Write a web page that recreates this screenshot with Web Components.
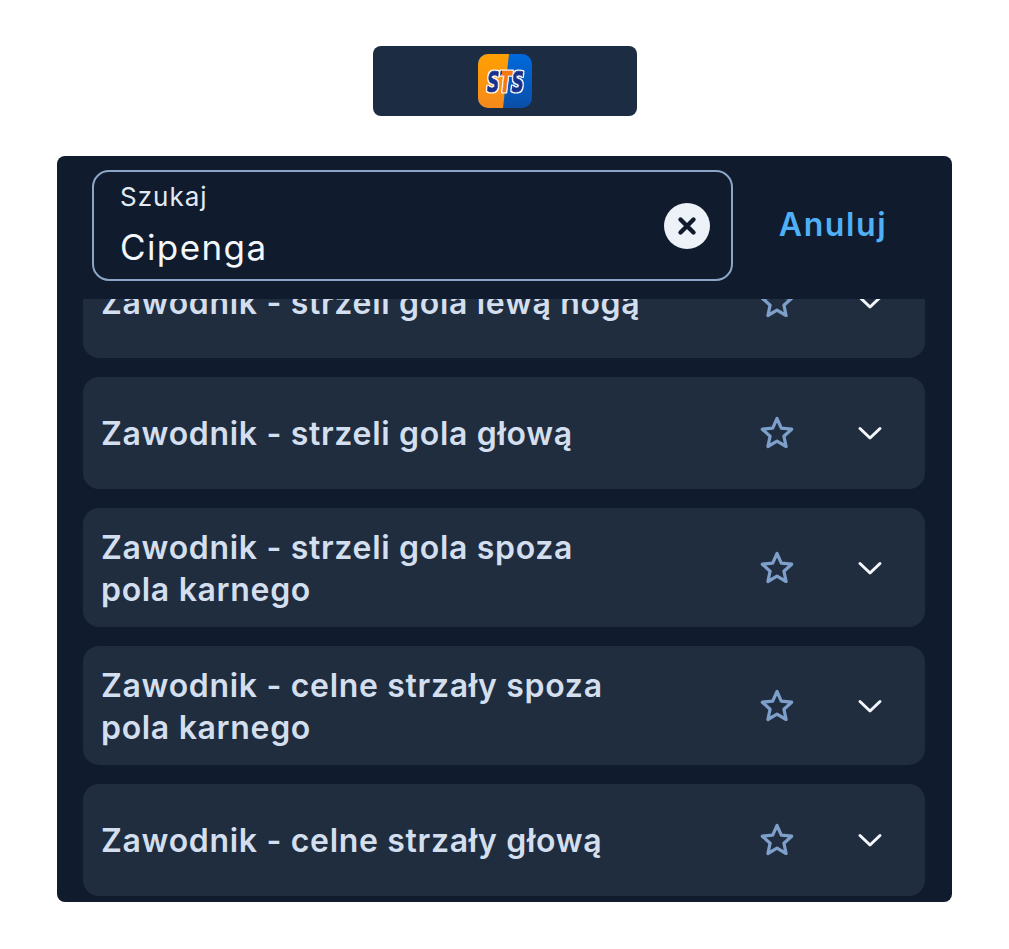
<!DOCTYPE html>
<html lang="pl">
<head>
<meta charset="utf-8">
<title>Szukaj</title>
<style>
    html, body { margin: 0; padding: 0; background: #fff; }
    body { font-family: 'Inter', 'Liberation Sans', sans-serif; }
</style>
</head>
<body>
<app-screen>
    <brand-bar></brand-bar>
    <market-panel>
        <search-header slot="header" label="Szukaj" value="Cipenga" cancel="Anuluj"></search-header>
        <market-row>Zawodnik - strzeli gola lewą nogą</market-row>
        <market-row>Zawodnik - strzeli gola głową</market-row>
        <market-row>Zawodnik - strzeli gola spoza<br>pola karnego</market-row>
        <market-row>Zawodnik - celne strzały spoza<br>pola karnego</market-row>
        <market-row>Zawodnik - celne strzały głową</market-row>
    </market-panel>
</app-screen>

<script>
class AppScreen extends HTMLElement {
    constructor() {
        super();
        this.attachShadow({ mode: 'open' });
        this.shadowRoot.innerHTML = `
        <style>
            :host {
                display: flex;
                flex-direction: column;
                align-items: center;
                gap: 40px;
                padding-top: 46px;
                height: 949px;
                box-sizing: border-box;
            }
        </style>
        <slot></slot>
        `;
    }
}

class BrandBar extends HTMLElement {
    constructor() {
        super();
        this.attachShadow({ mode: 'open' });
        this.shadowRoot.innerHTML = `
        <style>
            :host {
                display: flex;
                align-items: center;
                justify-content: center;
                width: 264px;
                height: 70px;
                border-radius: 8px;
                background: #1c2c42;
            }
            svg { display: block; }
        </style>
        <svg width="54" height="54" viewBox="0 0 54 54" role="img" aria-label="STS">
            <defs>
                <linearGradient id="orange" x1="0" y1="0" x2="0" y2="1">
                    <stop offset="0" stop-color="#ffa000"/>
                    <stop offset="1" stop-color="#f7891c"/>
                </linearGradient>
                <linearGradient id="blue" x1="0" y1="0" x2="0" y2="1">
                    <stop offset="0" stop-color="#0069dc"/>
                    <stop offset="1" stop-color="#0a4fa8"/>
                </linearGradient>
                <!-- one text run, coloured by hard stops: T orange, both S navy -->
                <linearGradient id="letters" gradientUnits="userSpaceOnUse" x1="0" y1="0" x2="61" y2="0" gradientTransform="skewX(-11)">
                    <stop offset="0.34" stop-color="#14318f"/>
                    <stop offset="0.34" stop-color="#f57a08"/>
                    <stop offset="0.66" stop-color="#f57a08"/>
                    <stop offset="0.66" stop-color="#14318f"/>
                </linearGradient>
                <filter id="outline" x="-10%" y="-20%" width="120%" height="140%">
                    <feMorphology in="SourceAlpha" operator="dilate" radius="1"/>
                    <feFlood flood-color="#fff" result="white"/>
                    <feComposite in="white" in2="SourceAlpha" operator="out" result="unused"/>
                    <feMorphology in="SourceAlpha" operator="dilate" radius="1" result="fat"/>
                    <feComposite in="white" in2="fat" operator="in" result="halo"/>
                    <feMerge>
                        <feMergeNode in="halo"/>
                        <feMergeNode in="SourceGraphic"/>
                    </feMerge>
                </filter>
                <clipPath id="tile"><rect width="54" height="54" rx="10"/></clipPath>
            </defs>
            <g clip-path="url(#tile)">
                <rect width="54" height="54" fill="url(#blue)"/>
                <polygon points="0,0 31,0 25,54 0,54" fill="url(#orange)"/>
            </g>
            <g filter="url(#outline)">
                <text transform="translate(9 37.5) scale(.6 1)" font-family="'DejaVu Sans', sans-serif" font-weight="700" font-style="italic" font-size="29" stroke="url(#letters)" stroke-width="1.2" stroke-linejoin="round" fill="url(#letters)">STS</text>
            </g>
        </svg>
        `;
    }
}

class MarketPanel extends HTMLElement {
    constructor() {
        super();
        this.attachShadow({ mode: 'open' });
        this.shadowRoot.innerHTML = `
        <style>
            :host {
                display: flex;
                flex-direction: column;
                width: 895px;
                height: 746px;
                border-radius: 8px;
                background: #101c2d;
                overflow: hidden;
            }
            .list {
                flex: 1;
                min-height: 0;
                overflow: hidden;
                display: flex;
                flex-direction: column;
                justify-content: flex-end;
                gap: 19px;
                padding: 0 27px 6px 26px;
            }
        </style>
        <slot name="header"></slot>
        <div class="list"><slot></slot></div>
        `;
    }
}

class SearchHeader extends HTMLElement {
    constructor() {
        super();
        this.attachShadow({ mode: 'open' });
        this.shadowRoot.innerHTML = `
        <style>
            :host {
                display: flex;
                flex: none;
                align-items: flex-start;
                height: 143px;
                padding: 14px 0 0 35px;
                box-sizing: border-box;
            }
            .field {
                display: flex;
                align-items: center;
                justify-content: space-between;
                width: 641px;
                height: 111px;
                box-sizing: border-box;
                padding: 0 21px 0 26px;
                border: 2px solid #8ba6c6;
                border-radius: 17px;
            }
            .label {
                font-size: 26px;
                line-height: 32px;
                letter-spacing: 1px;
                color: #e2eaf4;
                margin-bottom: 10px;
                margin-top: -3px;
            }
            .value {
                font-size: 35px;
                line-height: 44px;
                letter-spacing: 1.4px;
                color: #f3f6fa;
                position: relative;
                top: 2px;
            }
            .clear {
                flex: none;
                display: block;
                width: 46px;
                height: 46px;
            }
            .cancel {
                flex: 1;
                display: flex;
                align-items: center;
                justify-content: center;
                height: 109px;
                font-size: 32px;
                font-weight: 600;
                letter-spacing: 1.6px;
                color: #4fb0f5;
                padding-right: 19px;
            }
        </style>
        <div class="field">
            <div>
                <div class="label"></div>
                <div class="value"></div>
            </div>
            <svg class="clear" viewBox="0 0 46 46" aria-hidden="true">
                <circle cx="23" cy="23" r="23" fill="#edf2f9"/>
                <path d="M16.5 16.5l13 13M29.5 16.5l-13 13" fill="none" stroke="#101c2d" stroke-width="4.4" stroke-linecap="round"/>
            </svg>
        </div>
        <div class="cancel"></div>
        `;
    }

    connectedCallback() {
        this.shadowRoot.querySelector('.label').textContent = this.getAttribute('label');
        this.shadowRoot.querySelector('.value').textContent = this.getAttribute('value');
        this.shadowRoot.querySelector('.cancel').textContent = this.getAttribute('cancel');
    }
}

class MarketRow extends HTMLElement {
    constructor() {
        super();
        this.attachShadow({ mode: 'open' });
        this.shadowRoot.innerHTML = `
        <style>
            :host {
                display: flex;
                flex: none;
                align-items: center;
                min-height: 112px;
                box-sizing: border-box;
                padding: 17.5px 42px 17.5px 18px;
                border-radius: 16px;
                background: #202d3f;
            }
            .title {
                flex: 1;
                font-size: 32px;
                line-height: 42px;
                letter-spacing: 0.68px;
                font-weight: 600;
                color: #d3dfee;
                position: relative;
                top: 1px;
            }
            .star { display: block; width: 36px; height: 36px; margin-right: 62px; }
            .chevron { display: block; width: 26px; height: 16px; }
        </style>
        <div class="title"><slot></slot></div>
        <svg class="star" viewBox="0 0 36 36" aria-hidden="true">
            <path d="M18 3.5l4.3 9.6 10.4 1.1-7.8 7 2.2 10.3-9.1-5.3-9.1 5.3 2.2-10.3-7.8-7 10.4-1.1z" fill="none" stroke="#7f9fcb" stroke-width="3.2" stroke-linejoin="round"/>
        </svg>
        <svg class="chevron" viewBox="0 0 26 16" aria-hidden="true">
            <path d="M3 3.5l10 9.5 10-9.5" fill="none" stroke="#f3f6fa" stroke-width="3" stroke-linecap="round" stroke-linejoin="round"/>
        </svg>
        `;
    }
}

customElements.define('app-screen', AppScreen);
customElements.define('brand-bar', BrandBar);
customElements.define('market-panel', MarketPanel);
customElements.define('search-header', SearchHeader);
customElements.define('market-row', MarketRow);
</script>
</body>
</html>
